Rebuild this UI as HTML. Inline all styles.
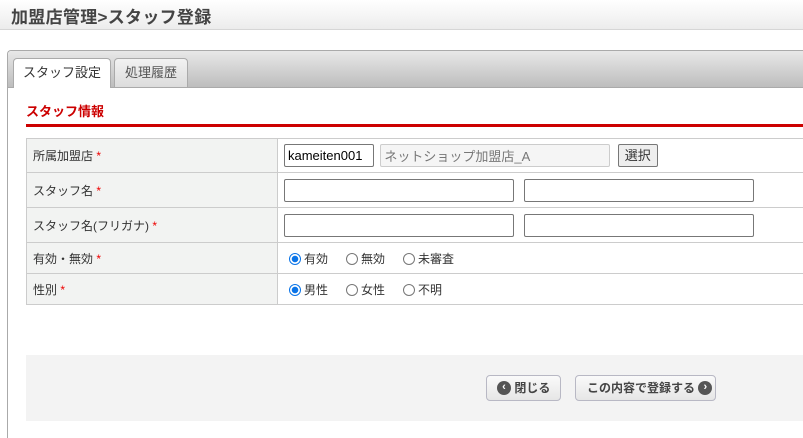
<!DOCTYPE html>
<html><head><meta charset="utf-8"><style>
html,body{margin:0;width:803px;height:438px;overflow:hidden}
body{background:#fff;font-family:"Liberation Sans","Noto Sans CJK JP",sans-serif;font-size:12px;color:#333;position:relative}
.hd{position:absolute;left:0;top:0;width:803px;height:29px;background:linear-gradient(#fff,#ececec);border-bottom:1px solid #d6d6d6}
.hd span{position:absolute;left:11px;top:3px;font-size:17px;font-weight:bold;color:#444;letter-spacing:0.3px}
.panel{position:absolute;left:7px;top:50px;width:796px;height:387px;border:1px solid #aaa;border-right:none;border-bottom:none;border-radius:4px 0 0 0;background:#fff}
.tabbar{position:absolute;left:0;top:0;right:0;height:36px;background:linear-gradient(#e8e8e8,#bdbdbd);border-bottom:1px solid #aaa;border-radius:4px 0 0 0}
.tab{position:absolute;top:7px;height:28px;border:1px solid #aaa;border-bottom:none;border-radius:4px 4px 0 0;font-size:13px;line-height:28px;text-align:center}
.t1{left:5px;width:96px;background:#fff;height:29px;color:#333}
.t2{left:106px;width:72px;background:linear-gradient(#f2f2f2,#dcdcdc);color:#555}
.h2{position:absolute;left:26px;top:101px;color:#c00;font-weight:bold;font-size:13px}
.rl{position:absolute;left:26px;top:124px;width:777px;height:3px;background:#c00}
table{position:absolute;left:26px;top:138px;border-collapse:collapse;width:777px}
td{border:1px solid #ccc;padding:0 0 0 6px;font-size:12px}
tr td:last-child{border-right:none}
td.l{background:#f2f3f2;width:244px}
.r{color:#e00}
input.t{box-sizing:border-box;height:23px;border:1px solid #777;border-radius:2px;font:13px "Liberation Sans","Noto Sans CJK JP",sans-serif;padding:0 3px;vertical-align:middle}
.rad{display:inline-block;width:12px;height:12px;border:1px solid #777;border-radius:50%;vertical-align:-2px;margin-right:3px;box-sizing:border-box}
.on{border:1px solid #0a74e8;background:radial-gradient(#0a74e8 3px,#fff 3.5px)}
.it{display:inline-block;margin-right:18px}
.ft{position:absolute;left:26px;top:355px;width:777px;height:66px;background:#f3f3f3}
.bt{position:absolute;top:375px;height:26px;box-sizing:border-box;border:1px solid #b8b8c4;border-radius:4px;background:linear-gradient(#fafafa,#e6e6e6);font-size:12px;font-weight:bold;color:#444;line-height:24px;white-space:nowrap}
.ic{display:inline-block;width:14px;height:14px;border-radius:50%;background:#555;color:#fff;font-size:11px;line-height:13px;text-align:center;vertical-align:middle;position:relative;top:-1px}
</style></head><body>
<div class="hd"><span>加盟店管理&gt;スタッフ登録</span></div>
<div class="panel"><div class="tabbar"></div><div class="tab t1">スタッフ設定</div><div class="tab t2">処理履歴</div></div>
<div class="h2">スタッフ情報</div><div class="rl"></div>
<table>
<tr style="height:34px"><td class="l">所属加盟店 <span class="r">*</span></td><td><input class="t" style="width:90px" value="kameiten001"> <input class="t" style="width:230px;background:#f5f5f5;border-color:#ccc;color:#777;margin-left:3px" value="ネットショップ加盟店_A"> <span style="display:inline-block;margin-left:4px;border:1px solid #777;border-radius:2px;background:#eee;padding:0 6px;height:21px;line-height:21px;vertical-align:middle;font-size:13px">選択</span></td></tr>
<tr style="height:35px"><td class="l">スタッフ名 <span class="r">*</span></td><td><input class="t" style="width:230px"> <input class="t" style="width:230px;margin-left:7px"></td></tr>
<tr style="height:35px"><td class="l">スタッフ名(フリガナ) <span class="r">*</span></td><td><input class="t" style="width:230px"> <input class="t" style="width:230px;margin-left:7px"></td></tr>
<tr style="height:31px"><td class="l">有効・無効 <span class="r">*</span></td><td style="padding-left:11px"><span class="it"><span class="rad on"></span>有効</span><span class="it"><span class="rad"></span>無効</span><span class="it"><span class="rad"></span>未審査</span></td></tr>
<tr style="height:31px"><td class="l">性別 <span class="r">*</span></td><td style="padding-left:11px"><span class="it"><span class="rad on"></span>男性</span><span class="it"><span class="rad"></span>女性</span><span class="it"><span class="rad"></span>不明</span></td></tr>
</table>
<div class="ft"></div>
<div class="bt" style="left:486px;width:75px;padding-left:10px"><span class="ic">‹</span> 閉じる</div>
<div class="bt" style="left:575px;width:141px;padding-left:11px">この内容で登録する <span class="ic">›</span></div>
</body></html>
